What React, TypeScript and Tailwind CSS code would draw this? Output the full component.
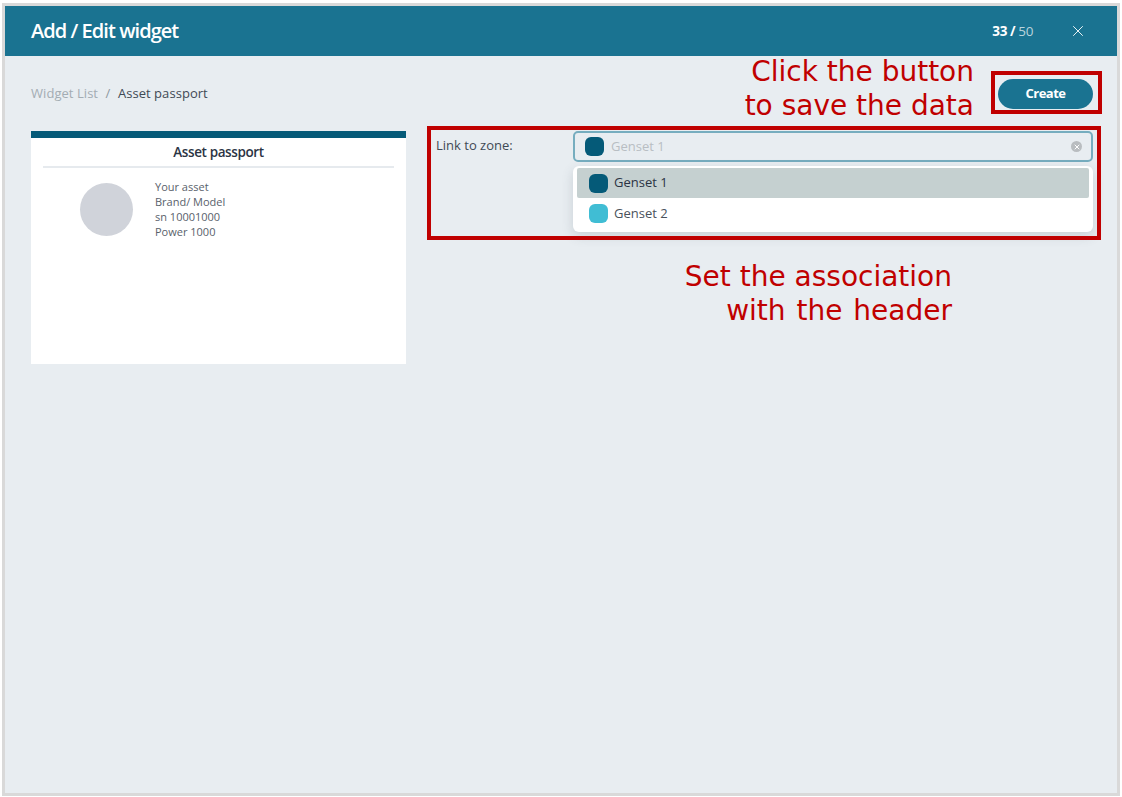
import { X } from "lucide-react";

const appFont = "font-['Open_Sans',sans-serif]";
const noteFont = "font-['DejaVu_Sans',sans-serif]";

function Swatch({ color }: { color: string }) {
  return <span className={`h-[19px] w-[19px] shrink-0 rounded-[6px] ${color}`} />;
}

export default function App() {
  return (
    <div className={`h-[797px] w-[1122px] overflow-hidden bg-white pl-[2px] pt-[3px] ${appFont}`}>
      <div className="relative flex h-[793px] w-[1118px] flex-col border-[3px] border-[#d9d9d9] bg-[#e8edf1]">
        <header className="flex h-[50px] shrink-0 items-center bg-[#1a7391] pl-[26px] pr-[30px] text-white">
          <h1 className="text-[20px] font-semibold tracking-[-0.95px]">Add / Edit widget</h1>
          <div className="ml-auto text-[13.5px] tracking-[-0.4px]">
            <span className="font-bold">33 /</span> <span className="text-[#b9d3dd]">50</span>
          </div>
          <X className="ml-[36px] h-[18px] w-[18px]" strokeWidth={1.2} />
        </header>

        <div className="flex h-[75px] shrink-0 items-center justify-between pl-[26px] pr-[24px]">
          <div className="text-[13px] tracking-[0.05px]">
            <span className="text-[#a3acb3]">Widget List</span>
            <span className="mx-[7.5px] text-[#8d979f]">/</span>
            <span className="text-[#3f4a55]">Asset passport</span>
          </div>
          <button className="h-[30px] w-[95px] rounded-full bg-[#1a7391] text-[13px] font-bold tracking-[-0.5px] text-white">
            Create
          </button>
        </div>

        <div className="flex items-start pl-[26px] pr-[21px]">
          <section className="h-[233px] w-[375px] shrink-0 border-t-[7px] border-[#055a78] bg-white">
            <h2 className="mx-[12px] flex h-[30px] items-center justify-center border-b-2 border-[#e6eaee] pt-[1px] text-[13.5px] font-semibold tracking-[-0.4px] text-[#2b3444]">
              Asset passport
            </h2>
            <div className="flex pl-[49px] pt-[11px]">
              <span className="mt-[4px] h-[53px] w-[53px] rounded-full bg-[#d0d3da]" />
              <div className="ml-[22px] text-[11px] leading-[15px] text-[#59616b]">
                <p>Your asset</p>
                <p>Brand/ Model</p>
                <p>sn 10001000</p>
                <p>Power 1000</p>
              </div>
            </div>
          </section>

          <div className="ml-[30px] flex flex-1">
            <label className="w-[137px] pt-[5px] text-[13px] text-[#3f4a55]">Link to zone:</label>
            <div className="w-[520px]">
              <div className="flex h-[31px] items-center rounded-[5px] border-2 border-[#76adbf] pl-[10px] pr-[9px]">
                <Swatch color="bg-[#055a78]" />
                <span className="ml-[7px] text-[13px] text-[#b8bec3]">Genset 1</span>
                <span className="ml-auto flex h-[11px] w-[11px] items-center justify-center rounded-full bg-[#b9bdc0] text-white">
                  <X className="h-[8px] w-[8px]" strokeWidth={3} />
                </span>
              </div>
              <div className="mt-[4px] rounded-[6px] bg-white px-[4px] pb-[3px] pt-[2px] shadow-[0_4px_12px_rgba(60,80,90,0.18)]">
                <div className="flex h-[30px] items-center rounded-[2px] bg-[#c5d0d0] pl-[12px] text-[13px] font-medium text-[#2b3444]">
                  <Swatch color="bg-[#055a78]" />
                  <span className="ml-[6px]">Genset 1</span>
                </div>
                <div className="flex h-[31px] items-center pl-[12px] text-[13px] text-[#4a525c]">
                  <Swatch color="bg-[#40bdd4]" />
                  <span className="ml-[6px]">Genset 2</span>
                </div>
              </div>
            </div>
          </div>
        </div>

        {/* annotations drawn over the screen */}
        <div className={`absolute right-[143px] top-[49px] text-right text-[28px] leading-[34px] text-[#c00000] ${noteFont}`}>
          <p>Click the button</p>
          <p>to save the data</p>
        </div>
        <div className="absolute left-[986px] top-[65px] h-[43px] w-[111px] border-4 border-[#c00000]" />
        <div className="absolute left-[422px] top-[120px] h-[114px] w-[674px] border-4 border-[#c00000]" />
        <div className={`absolute right-[165px] top-[254px] text-right text-[28px] leading-[34px] text-[#c00000] ${noteFont}`}>
          <p>Set the association</p>
          <p className="[word-spacing:2px]">with the header</p>
        </div>
      </div>
    </div>
  );
}
